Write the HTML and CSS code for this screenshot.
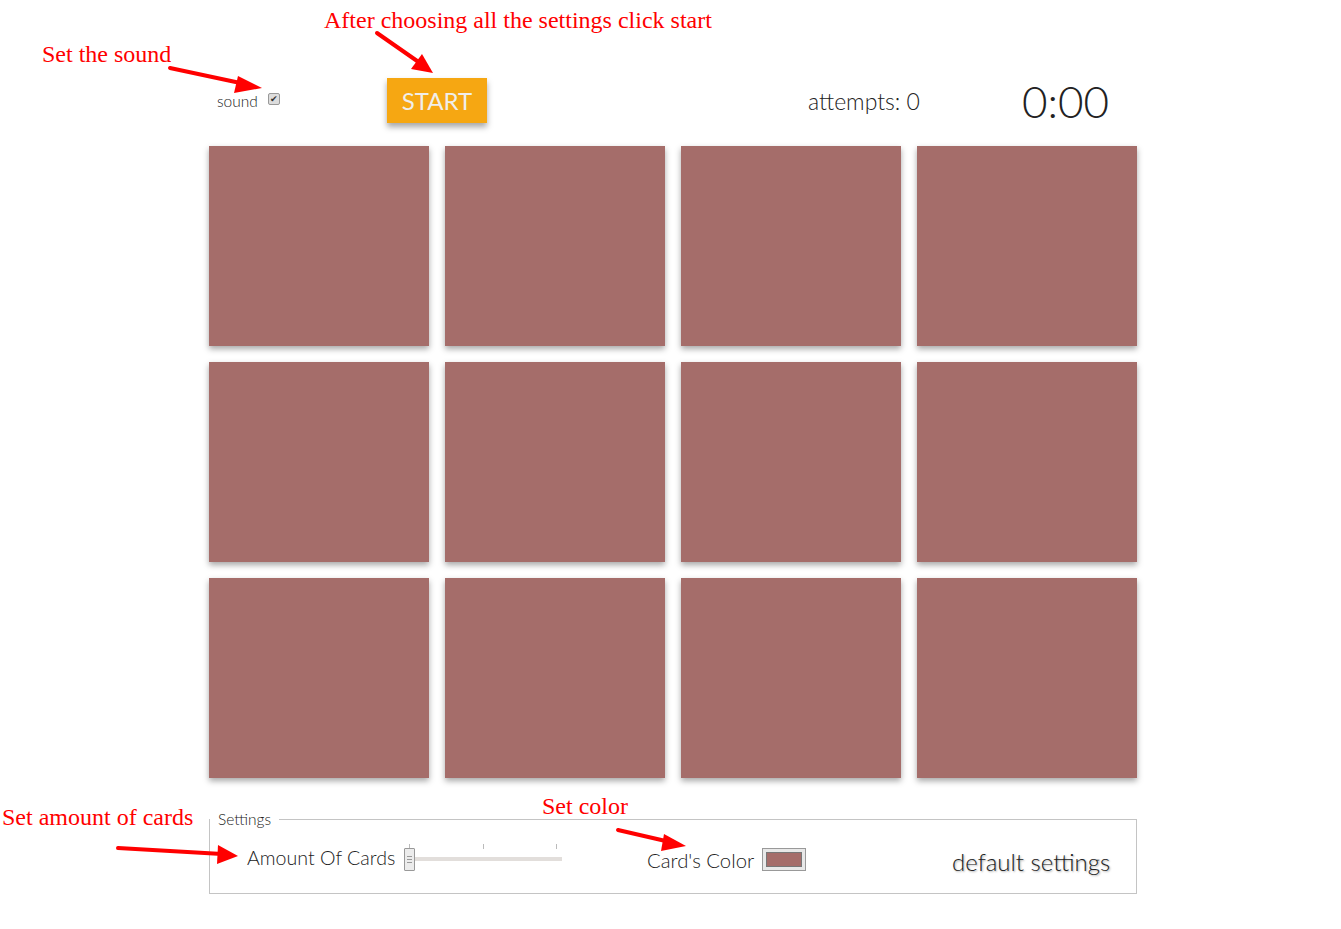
FILE: index.html
```html
<!DOCTYPE html>
<html>
<head>
<meta charset="utf-8">
<link rel="stylesheet" href="styles.css">
</head>
<body>
<div class="page">
  <header class="topbar">
    <label class="sound">sound <span class="check">&#10004;</span></label>
    <div><button class="start">START</button></div>
    <div class="attempts">attempts: 0</div>
    <div class="timer">0:00</div>
  </header>
  <main class="board">
    <div class="card"></div><div class="card"></div><div class="card"></div><div class="card"></div>
    <div class="card"></div><div class="card"></div><div class="card"></div><div class="card"></div>
    <div class="card"></div><div class="card"></div><div class="card"></div><div class="card"></div>
  </main>
  <fieldset class="settings">
    <legend>Settings</legend>
    <div class="settings-row">
      <div class="amount">
        <span>Amount Of Cards</span>
        <div class="slider">
          <div class="ticks"><i></i><i></i><i></i></div>
          <div class="track"></div>
          <div class="thumb"><b></b><b></b><b></b></div>
        </div>
      </div>
      <div class="color">
        <span>Card's Color</span>
        <span class="swatch"><span></span></span>
      </div>
      <div class="defaults">default settings</div>
    </div>
  </fieldset>
</div>

<div class="note n1">Set the sound</div>
<div class="note n2">After choosing all the settings click start</div>
<div class="note n3">Set amount of cards</div>
<div class="note n4">Set color</div>

<svg class="arrows" width="1341" height="929" viewBox="0 0 1341 929">
  <g stroke="#f00" stroke-width="4" stroke-linecap="round" fill="#f00">
    <line x1="170" y1="68" x2="245" y2="84"/>
    <line x1="377" y1="33" x2="420" y2="63"/>
    <line x1="118" y1="848" x2="222" y2="854"/>
    <line x1="618" y1="830" x2="670" y2="842"/>
  </g>
  <g fill="#f00">
    <polygon points="262,88 238,76 234,93"/>
    <polygon points="433,73 411,69 422,54"/>
    <polygon points="238,856 218,845 217,864"/>
    <polygon points="686,846 664,834 661,851"/>
  </g>
</svg>
</body>
</html>
```
FILE: styles.css
```css
html, body {
  margin: 0;
  padding: 0;
  background: #fff;
}
body {
  width: 1341px;
  height: 929px;
  position: relative;
  overflow: hidden;
  font-family: Lato, "Liberation Sans", sans-serif;
  font-weight: 300;
  color: #222;
}
.page {
  margin-left: 209px;
  width: 928px;
  padding-top: 78px;
}
.topbar {
  display: grid;
  grid-template-columns: 170px 421px 214px auto;
  grid-template-rows: 45px;
  align-items: center;
  height: 45px;
  padding-left: 8px;
}
.sound {
  font-size: 15.5px;
  line-height: 20px;
  display: flex;
  align-items: center;
  gap: 10px;
  margin-top: 1px;
}
.check {
  width: 10px;
  height: 10px;
  border: 1px solid #999;
  border-radius: 2px;
  background: #ddd;
  font-size: 9px;
  line-height: 10px;
  text-align: center;
  color: #333;
  margin-top: -5px;
}
.start {
  display: block;
  width: 100px;
  height: 45px;
  border: none;
  background: #f6a712;
  color: #f0eeea;
  font-family: Lato, "Liberation Sans", sans-serif;
  font-weight: 400;
  font-size: 24px;
  padding: 0;
  box-shadow: 0 4px 6px rgba(0, 0, 0, 0.35);
}
.attempts {
  font-size: 23px;
  line-height: 28px;
  margin-top: 1px;
}
.timer {
  font-size: 44px;
  line-height: 50px;
  margin-top: 0;
}
.board {
  margin-top: 23px;
  display: grid;
  grid-template-columns: repeat(4, 220px);
  grid-auto-rows: 200px;
  gap: 16px;
}
.card {
  background: #a56d6a;
  box-shadow: 0 3px 6px rgba(0, 0, 0, 0.35);
}
.settings {
  margin: 32px 0 0 0;
  border: 1px solid #c4c4c4;
  padding: 0 28px 0 37px;
  height: 84px;
  box-sizing: border-box;
  width: 928px;
  min-width: 0;
}
.settings legend {
  font-size: 15.5px;
  padding: 0 8px 0 8px;
  margin-left: -37px;
}
.settings-row {
  display: flex;
  align-items: center;
  height: 56px;
  margin-top: 1px;
}
.amount {
  display: flex;
  align-items: center;
  font-size: 19.6px;
  width: 400px;
  gap: 9px;
  flex: none;
}
.slider {
  position: relative;
  width: 158px;
  height: 30px;
}
.track {
  position: absolute;
  left: 4px;
  right: 0;
  top: 15px;
  height: 4px;
  background: #e2dedb;
}
.ticks i {
  position: absolute;
  top: 2px;
  width: 1px;
  height: 5px;
  background: #bbb;
}
.ticks i:nth-child(1) { left: 5px; }
.ticks i:nth-child(2) { left: 79px; }
.ticks i:nth-child(3) { left: 152px; }
.thumb {
  position: absolute;
  left: 0;
  top: 6px;
  width: 9px;
  height: 21px;
  border: 1px solid #999;
  background: #ececec;
  border-radius: 1px;
  display: flex;
  flex-direction: column;
  justify-content: center;
  align-items: center;
  gap: 2px;
}
.thumb b {
  width: 5px;
  height: 1px;
  background: #999;
}
.color {
  display: flex;
  align-items: center;
  gap: 8px;
  font-size: 20.3px;
  width: 305px;
  flex: none;
  margin-top: 6px;
}
.swatch {
  display: inline-flex;
  width: 44px;
  height: 23px;
  border: 1px solid #999;
  background: #e8e8e8;
  padding: 3px;
  box-sizing: border-box;
  margin-top: -2px;
}
.swatch span {
  flex: 1;
  background: #a56d6a;
  border: 1px solid #777;
}
.defaults {
  font-size: 24px;
  white-space: nowrap;
  text-shadow: 1px 1px 2px rgba(0, 0, 0, 0.35);
  margin-top: 8px;
}
.note {
  position: absolute;
  font-family: "Liberation Serif", serif;
  font-size: 24px;
  color: #f00;
  white-space: nowrap;
}
.n1 { left: 42px; top: 41px; }
.n2 { left: 324px; top: 7px; }
.n3 { left: 2px; top: 804px; }
.n4 { left: 542px; top: 793px; }
.arrows {
  position: absolute;
  left: 0;
  top: 0;
  pointer-events: none;
}
```
